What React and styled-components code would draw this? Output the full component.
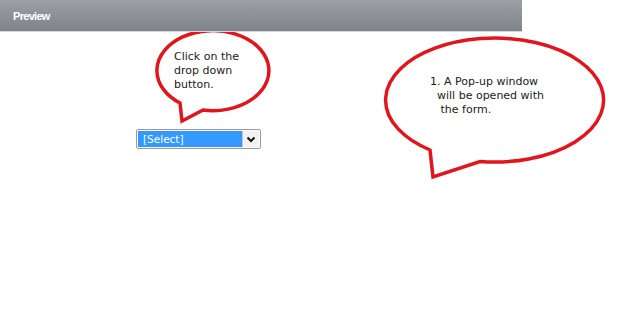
import React from "react";
import styled, { createGlobalStyle } from "styled-components";

const Global = createGlobalStyle`
	body {
		margin: 0;
		background: #ffffff;
		font-family: "DejaVu Sans", Verdana, sans-serif;
	}
`;

const Page = styled.div`
	width: 624px;
	height: 326px;
	display: flex;
	flex-direction: column;
`;

const Header = styled.div`
	width: 522px;
	height: 32px;
	box-sizing: border-box;
	padding-left: 13px;
	display: flex;
	align-items: center;
	background: linear-gradient(#9c9fa5, #7f838a);
	border-bottom: 1px solid #d4d6d9;
	color: #ffffff;
	font-family: "Liberation Sans", Arial, sans-serif;
	font-size: 11px;
	letter-spacing: -0.7px;
	font-weight: bold;
`;

const Canvas = styled.div`
	position: relative;
	flex: 1;
`;

const Bubbles = styled.svg`
	position: absolute;
	left: 0;
	top: 0;
`;

const Note = styled.div`
	position: absolute;
	left: ${(p) => p.x}px;
	top: ${(p) => p.y}px;
	font-size: 11px;
	line-height: 14px;
	color: #1a1a1a;
	white-space: pre;
`;

const SelectBox = styled.div`
	position: absolute;
	left: 136px;
	top: 97px;
	width: 125px;
	height: 20px;
	box-sizing: border-box;
	display: flex;
	align-items: stretch;
	padding: 1px;
	border: 1px solid #9a9a9a;
	border-radius: 2px;
	background: #ffffff;
`;

const Selected = styled.div`
	flex: 1;
	background: #3399ff;
	color: #ffffff;
	font-size: 10.5px;
	display: flex;
	align-items: center;
	padding-left: 5px;
`;

const ArrowBtn = styled.div`
	width: 16px;
	display: flex;
	align-items: center;
	justify-content: center;
	border-left: 1px solid #c8c8c8;
	background: #f2f2f2;
`;

export default function App() {
	return (
		<>
			<Global />
			<Page>
				<Header>Preview</Header>
				<Canvas>
					<Bubbles width="624" height="294" viewBox="0 32 624 294">
						<path
							d="M180 103 A56 40 0 1 1 203 110 L182 121 Z"
							fill="#ffffff"
							stroke="#e3141b"
							strokeWidth="3.5"
						/>
						<path
							d="M430 150 A109 62 0 1 1 480 161.5 L433 177 Z"
							fill="#ffffff"
							stroke="#e3141b"
							strokeWidth="3.5"
						/>
					</Bubbles>
					<Note x={174} y={18}>{"Click on the\ndrop down\nbutton."}</Note>
					<Note x={430} y={43}>{"1. A Pop-up window\n  will be opened with\n   the form."}</Note>
					<SelectBox>
						<Selected>[Select]</Selected>
						<ArrowBtn>
							<svg width="10" height="7" viewBox="0 0 10 7">
								<path d="M1.5 1.5 L5 5 L8.5 1.5" fill="none" stroke="#111" strokeWidth="2" />
							</svg>
						</ArrowBtn>
					</SelectBox>
				</Canvas>
			</Page>
		</>
	);
}
